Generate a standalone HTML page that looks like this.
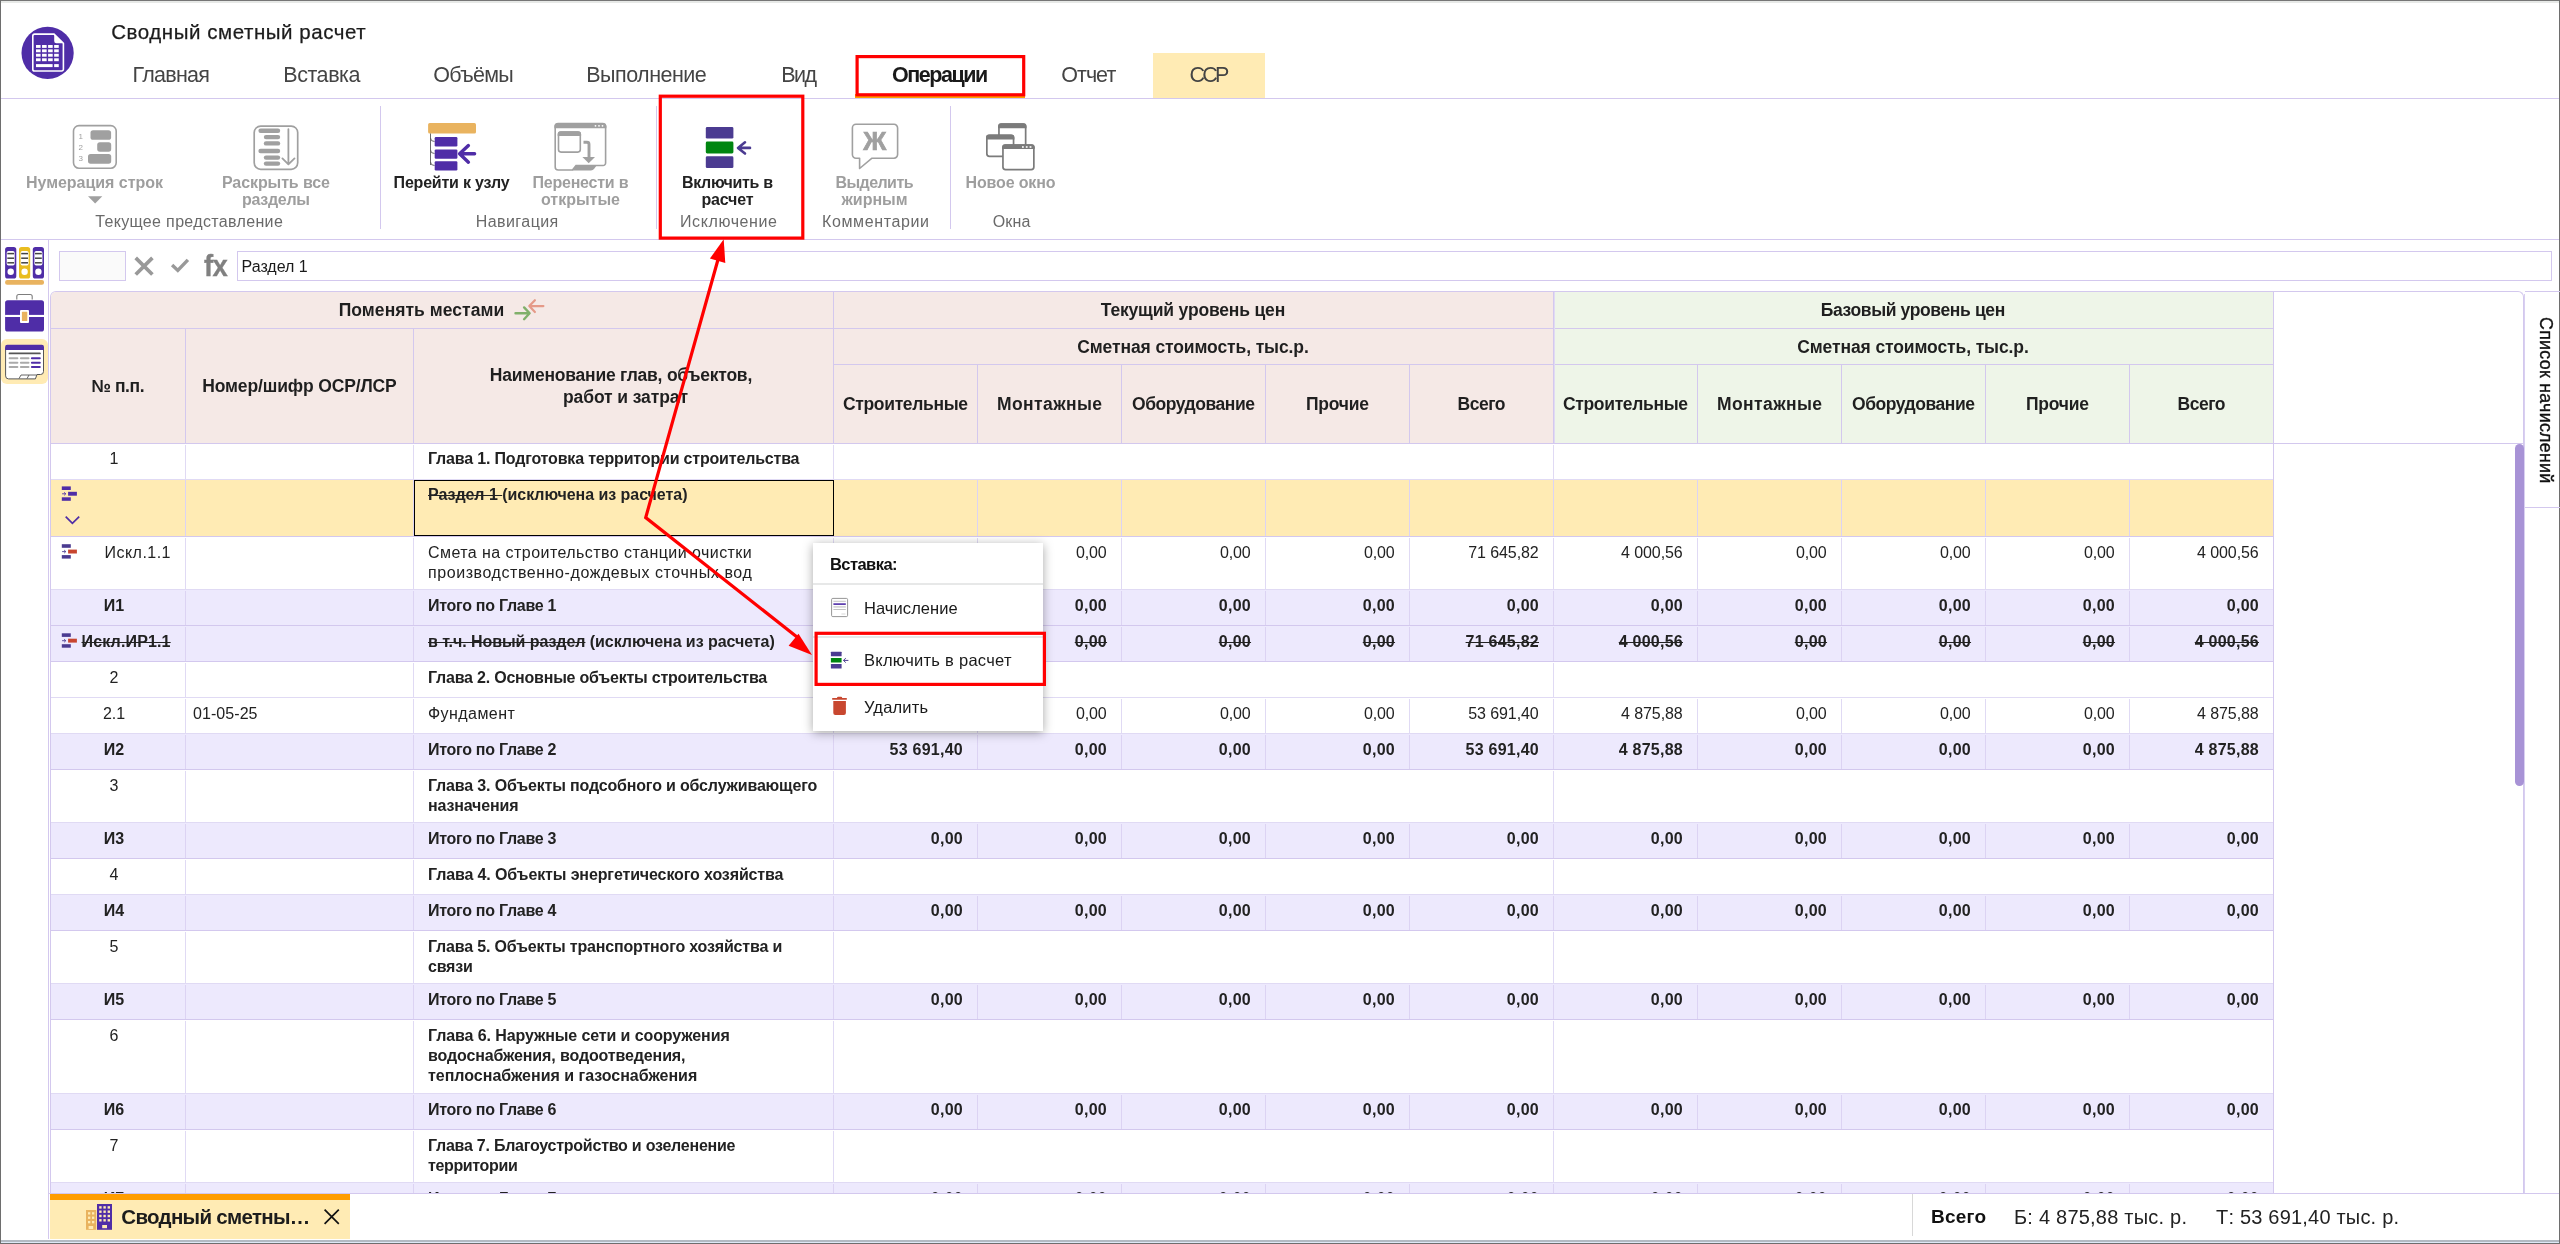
<!DOCTYPE html>
<html lang="ru"><head><meta charset="utf-8"><title>Сводный сметный расчет</title>
<style>
html,body{margin:0;padding:0}
body{width:2560px;height:1244px;overflow:hidden;background:#fff;font-family:"Liberation Sans", sans-serif;position:relative}
#app{position:absolute;left:0;top:0;width:2560px;height:1244px;overflow:hidden;will-change:transform}
</style></head><body><div id="app">
<div style="position:absolute;left:0px;top:0px;width:2560px;height:1px;background:#767676;"></div>
<div style="position:absolute;left:0px;top:1px;width:2560px;height:2px;background:#e7e9e7;"></div>
<div style="position:absolute;left:0px;top:1240px;width:2560px;height:2px;background:#b3bac3;"></div>
<div style="position:absolute;left:0px;top:1242px;width:2560px;height:1px;background:#dde9f7;"></div>
<div style="position:absolute;left:0px;top:1243px;width:2560px;height:1px;background:#6e6e6e;"></div>
<div style="position:absolute;left:0px;top:0px;width:1px;height:1244px;background:#6e6e6e;"></div>
<div style="position:absolute;left:2559px;top:0px;width:1px;height:1244px;background:#6e6e6e;"></div>
<div style="position:absolute;top:22.15px;font-size:20.5px;line-height:20.5px;white-space:nowrap;color:#1c1c1c;letter-spacing:0.555px;left:111.25px;-webkit-text-stroke:0.25px #1c1c1c;">Сводный сметный расчет</div>
<div style="position:absolute;left:1153px;top:53px;width:112px;height:45px;background:#ffebb4;"></div>
<div style="position:absolute;top:64.80px;font-size:21.5px;line-height:21.5px;white-space:nowrap;color:#444;letter-spacing:-0.722px;left:132.50px;">Главная</div>
<div style="position:absolute;top:64.80px;font-size:21.5px;line-height:21.5px;white-space:nowrap;color:#444;letter-spacing:-0.444px;left:283.25px;">Вставка</div>
<div style="position:absolute;top:64.80px;font-size:21.5px;line-height:21.5px;white-space:nowrap;color:#444;letter-spacing:-0.691px;left:433.25px;">Объёмы</div>
<div style="position:absolute;top:64.80px;font-size:21.5px;line-height:21.5px;white-space:nowrap;color:#444;letter-spacing:-0.515px;left:586.25px;">Выполнение</div>
<div style="position:absolute;top:64.80px;font-size:21.5px;line-height:21.5px;white-space:nowrap;color:#444;letter-spacing:-1.573px;left:781.25px;">Вид</div>
<div style="position:absolute;top:64.80px;font-size:21.5px;line-height:21.5px;white-space:nowrap;color:#444;letter-spacing:-0.966px;left:1061.25px;">Отчет</div>
<div style="position:absolute;top:64.80px;font-size:21.5px;line-height:21.5px;white-space:nowrap;color:#444;letter-spacing:-2.822px;left:1189.50px;">ССР</div>
<div style="position:absolute;top:64.80px;font-size:21.5px;line-height:21.5px;white-space:nowrap;color:#1a1a1a;font-weight:700;letter-spacing:-1.451px;left:892.00px;">Операции</div>
<div style="position:absolute;left:855px;top:94px;width:170px;height:4px;background:#ff9d00;"></div>
<div style="position:absolute;left:1px;top:98px;width:2558px;height:1px;background:#d3c8ee;"></div>
<div style="position:absolute;left:1px;top:239px;width:2558px;height:1px;background:#d3c8ee;"></div>
<div style="position:absolute;left:380px;top:106px;width:1px;height:123px;background:#d3c8ee;"></div>
<div style="position:absolute;left:656px;top:106px;width:1px;height:123px;background:#d3c8ee;"></div>
<div style="position:absolute;left:950px;top:106px;width:1px;height:123px;background:#d3c8ee;"></div>
<div style="position:absolute;top:175.46px;font-size:16px;line-height:16px;white-space:nowrap;color:#9e9e9e;font-weight:700;letter-spacing:-0.028px;left:26.00px;">Нумерация строк</div>
<div style="position:absolute;top:175.46px;font-size:16px;line-height:16px;white-space:nowrap;color:#9e9e9e;font-weight:700;letter-spacing:-0.096px;left:222.00px;">Раскрыть все</div>
<div style="position:absolute;top:192.46px;font-size:16px;line-height:16px;white-space:nowrap;color:#9e9e9e;font-weight:700;letter-spacing:-0.284px;left:242.00px;">разделы</div>
<div style="position:absolute;top:175.46px;font-size:16px;line-height:16px;white-space:nowrap;color:#222;font-weight:700;letter-spacing:-0.212px;left:393.60px;">Перейти к узлу</div>
<div style="position:absolute;top:175.46px;font-size:16px;line-height:16px;white-space:nowrap;color:#9e9e9e;font-weight:700;letter-spacing:-0.227px;left:532.50px;">Перенести в</div>
<div style="position:absolute;top:192.46px;font-size:16px;line-height:16px;white-space:nowrap;color:#9e9e9e;font-weight:700;letter-spacing:-0.008px;left:541.00px;">открытые</div>
<div style="position:absolute;top:175.46px;font-size:16px;line-height:16px;white-space:nowrap;color:#222;font-weight:700;letter-spacing:-0.339px;left:682.00px;">Включить в</div>
<div style="position:absolute;top:192.46px;font-size:16px;line-height:16px;white-space:nowrap;color:#222;font-weight:700;letter-spacing:-0.194px;left:701.50px;">расчет</div>
<div style="position:absolute;top:175.46px;font-size:16px;line-height:16px;white-space:nowrap;color:#9e9e9e;font-weight:700;letter-spacing:-0.564px;left:835.50px;">Выделить</div>
<div style="position:absolute;top:192.46px;font-size:16px;line-height:16px;white-space:nowrap;color:#9e9e9e;font-weight:700;letter-spacing:-0.023px;left:841.50px;">жирным</div>
<div style="position:absolute;top:175.46px;font-size:16px;line-height:16px;white-space:nowrap;color:#9e9e9e;font-weight:700;letter-spacing:-0.143px;left:965.50px;">Новое окно</div>
<div style="position:absolute;top:213.96px;font-size:16px;line-height:16px;white-space:nowrap;color:#6a6a6a;letter-spacing:0.344px;left:95.20px;">Текущее представление</div>
<div style="position:absolute;top:213.96px;font-size:16px;line-height:16px;white-space:nowrap;color:#6a6a6a;letter-spacing:0.445px;left:475.70px;">Навигация</div>
<div style="position:absolute;top:213.96px;font-size:16px;line-height:16px;white-space:nowrap;color:#6a6a6a;letter-spacing:0.603px;left:680.00px;">Исключение</div>
<div style="position:absolute;top:213.96px;font-size:16px;line-height:16px;white-space:nowrap;color:#6a6a6a;letter-spacing:0.623px;left:822.00px;">Комментарии</div>
<div style="position:absolute;top:213.96px;font-size:16px;line-height:16px;white-space:nowrap;color:#6a6a6a;letter-spacing:0.140px;left:992.70px;">Окна</div>
<div style="position:absolute;left:48px;top:240px;width:1px;height:999px;background:#d3c8ee;"></div>
<div style="position:absolute;left:1px;top:339px;width:47px;height:45px;background:#ffebb4;border-radius:6px;"></div>
<div style="position:absolute;left:59px;top:251px;width:65px;height:28px;border:1px solid #d3c8ee;background:#fafafa"></div>
<div style="position:absolute;left:237px;top:251px;width:2313px;height:28px;border:1px solid #d3c8ee;background:#fff"></div>
<div style="position:absolute;top:258.96px;font-size:16px;line-height:16px;white-space:nowrap;color:#1a1a1a;letter-spacing:-0.032px;left:241.60px;">Раздел 1</div>
<div style="position:absolute;top:250.64px;font-size:29.6px;line-height:29.6px;white-space:nowrap;color:#808080;font-weight:700;left:204.30px;-webkit-text-stroke:0.35px #808080;transform:scaleX(0.93);transform-origin:0 0;letter-spacing:-0.8px;">fx</div>
<div style="position:absolute;left:50px;top:291px;width:2474px;height:903px;border:1px solid #d3c8ee;border-radius:6px 6px 0 0;border-bottom:none;box-sizing:border-box"></div>
<div style="position:absolute;left:51px;top:292px;width:1502px;height:151px;background:#f5e9e6;border-radius:5px 0 0 0;"></div>
<div style="position:absolute;left:1553px;top:292px;width:720px;height:151px;background:#eef5e8;"></div>
<div style="position:absolute;left:51px;top:328px;width:2222px;height:1px;background:#d3c8ee;"></div>
<div style="position:absolute;left:833px;top:364px;width:1440px;height:1px;background:#d3c8ee;"></div>
<div style="position:absolute;left:185px;top:329px;width:1px;height:114px;background:#d3c8ee;"></div>
<div style="position:absolute;left:413px;top:329px;width:1px;height:114px;background:#d3c8ee;"></div>
<div style="position:absolute;left:833px;top:292px;width:1px;height:151px;background:#d3c8ee;"></div>
<div style="position:absolute;left:1553px;top:292px;width:1px;height:151px;background:#d3c8ee;"></div>
<div style="position:absolute;left:1554px;top:292px;width:1px;height:151px;background:#e0daf4;"></div>
<div style="position:absolute;left:2273px;top:292px;width:1px;height:151px;background:#d3c8ee;"></div>
<div style="position:absolute;left:977px;top:365px;width:1px;height:78px;background:#d3c8ee;"></div>
<div style="position:absolute;left:1121px;top:365px;width:1px;height:78px;background:#d3c8ee;"></div>
<div style="position:absolute;left:1265px;top:365px;width:1px;height:78px;background:#d3c8ee;"></div>
<div style="position:absolute;left:1409px;top:365px;width:1px;height:78px;background:#d3c8ee;"></div>
<div style="position:absolute;left:1697px;top:365px;width:1px;height:78px;background:#d3c8ee;"></div>
<div style="position:absolute;left:1841px;top:365px;width:1px;height:78px;background:#d3c8ee;"></div>
<div style="position:absolute;left:1985px;top:365px;width:1px;height:78px;background:#d3c8ee;"></div>
<div style="position:absolute;left:2129px;top:365px;width:1px;height:78px;background:#d3c8ee;"></div>
<div style="position:absolute;left:51px;top:443px;width:2473px;height:1px;background:#d3c8ee;"></div>
<div style="position:absolute;top:302.49px;font-size:17.5px;line-height:17.5px;white-space:nowrap;color:#1f1f1f;font-weight:700;letter-spacing:0.042px;left:338.75px;">Поменять местами</div>
<div style="position:absolute;top:302.49px;font-size:17.5px;line-height:17.5px;white-space:nowrap;color:#1f1f1f;font-weight:700;letter-spacing:-0.171px;left:1100.75px;">Текущий уровень цен</div>
<div style="position:absolute;top:302.49px;font-size:17.5px;line-height:17.5px;white-space:nowrap;color:#1f1f1f;font-weight:700;letter-spacing:-0.372px;left:1820.75px;">Базовый уровень цен</div>
<div style="position:absolute;top:339.39px;font-size:17.5px;line-height:17.5px;white-space:nowrap;color:#1f1f1f;font-weight:700;letter-spacing:-0.111px;left:1077.25px;">Сметная стоимость, тыс.р.</div>
<div style="position:absolute;top:339.39px;font-size:17.5px;line-height:17.5px;white-space:nowrap;color:#1f1f1f;font-weight:700;letter-spacing:-0.111px;left:1797.25px;">Сметная стоимость, тыс.р.</div>
<div style="position:absolute;top:377.69px;font-size:17.5px;line-height:17.5px;white-space:nowrap;color:#1f1f1f;font-weight:700;letter-spacing:-0.447px;left:91.50px;">№ п.п.</div>
<div style="position:absolute;top:377.69px;font-size:17.5px;line-height:17.5px;white-space:nowrap;color:#1f1f1f;font-weight:700;letter-spacing:-0.142px;left:202.25px;">Номер/шифр ОСР/ЛСР</div>
<div style="position:absolute;top:367.39px;font-size:17.5px;line-height:17.5px;white-space:nowrap;color:#1f1f1f;font-weight:700;letter-spacing:-0.226px;left:489.75px;">Наименование глав, объектов,</div>
<div style="position:absolute;top:388.89px;font-size:17.5px;line-height:17.5px;white-space:nowrap;color:#1f1f1f;font-weight:700;letter-spacing:-0.100px;left:563.00px;">работ и затрат</div>
<div style="position:absolute;top:396.39px;font-size:17.5px;line-height:17.5px;white-space:nowrap;color:#1f1f1f;font-weight:700;letter-spacing:-0.343px;left:843.00px;">Строительные</div>
<div style="position:absolute;top:396.39px;font-size:17.5px;line-height:17.5px;white-space:nowrap;color:#1f1f1f;font-weight:700;letter-spacing:0.401px;left:997.00px;">Монтажные</div>
<div style="position:absolute;top:396.39px;font-size:17.5px;line-height:17.5px;white-space:nowrap;color:#1f1f1f;font-weight:700;letter-spacing:-0.453px;left:1132.00px;">Оборудование</div>
<div style="position:absolute;top:396.39px;font-size:17.5px;line-height:17.5px;white-space:nowrap;color:#1f1f1f;font-weight:700;letter-spacing:-0.234px;left:1306.00px;">Прочие</div>
<div style="position:absolute;top:396.39px;font-size:17.5px;line-height:17.5px;white-space:nowrap;color:#1f1f1f;font-weight:700;letter-spacing:-0.463px;left:1457.50px;">Всего</div>
<div style="position:absolute;top:396.39px;font-size:17.5px;line-height:17.5px;white-space:nowrap;color:#1f1f1f;font-weight:700;letter-spacing:-0.343px;left:1563.00px;">Строительные</div>
<div style="position:absolute;top:396.39px;font-size:17.5px;line-height:17.5px;white-space:nowrap;color:#1f1f1f;font-weight:700;letter-spacing:0.401px;left:1717.00px;">Монтажные</div>
<div style="position:absolute;top:396.39px;font-size:17.5px;line-height:17.5px;white-space:nowrap;color:#1f1f1f;font-weight:700;letter-spacing:-0.453px;left:1852.00px;">Оборудование</div>
<div style="position:absolute;top:396.39px;font-size:17.5px;line-height:17.5px;white-space:nowrap;color:#1f1f1f;font-weight:700;letter-spacing:-0.234px;left:2026.00px;">Прочие</div>
<div style="position:absolute;top:396.39px;font-size:17.5px;line-height:17.5px;white-space:nowrap;color:#1f1f1f;font-weight:700;letter-spacing:-0.463px;left:2177.50px;">Всего</div>
<div style="position:absolute;left:0;top:0;width:2560px;height:1193px;overflow:hidden">
<div style="position:absolute;left:51px;top:479px;width:2222px;height:1px;background:#e0daf4;"></div>
<div style="position:absolute;left:185px;top:445px;width:1px;height:34px;background:#e0daf4;"></div>
<div style="position:absolute;left:413px;top:445px;width:1px;height:34px;background:#e0daf4;"></div>
<div style="position:absolute;left:833px;top:445px;width:1px;height:34px;background:#e0daf4;"></div>
<div style="position:absolute;left:1553px;top:445px;width:1px;height:34px;background:#e0daf4;"></div>
<div style="position:absolute;left:2273px;top:445px;width:1px;height:34px;background:#e0daf4;"></div>
<div style="position:absolute;top:451.46px;font-size:16px;line-height:16px;white-space:nowrap;color:#222;left:109.55px;">1</div>
<div style="position:absolute;top:451.46px;font-size:16px;line-height:16px;white-space:nowrap;color:#222;font-weight:700;letter-spacing:-0.180px;left:428.00px;">Глава 1. Подготовка территории строительства</div>
<div style="position:absolute;left:51px;top:480px;width:2222px;height:56px;background:#ffebb4;"></div>
<div style="position:absolute;left:51px;top:536px;width:2222px;height:1px;background:#d3c8ee;"></div>
<div style="position:absolute;left:185px;top:480px;width:1px;height:56px;background:#dcd3f3;"></div>
<div style="position:absolute;left:413px;top:480px;width:1px;height:56px;background:#dcd3f3;"></div>
<div style="position:absolute;left:833px;top:480px;width:1px;height:56px;background:#dcd3f3;"></div>
<div style="position:absolute;left:977px;top:480px;width:1px;height:56px;background:#dcd3f3;"></div>
<div style="position:absolute;left:1121px;top:480px;width:1px;height:56px;background:#dcd3f3;"></div>
<div style="position:absolute;left:1265px;top:480px;width:1px;height:56px;background:#dcd3f3;"></div>
<div style="position:absolute;left:1409px;top:480px;width:1px;height:56px;background:#dcd3f3;"></div>
<div style="position:absolute;left:1553px;top:480px;width:1px;height:56px;background:#dcd3f3;"></div>
<div style="position:absolute;left:1697px;top:480px;width:1px;height:56px;background:#dcd3f3;"></div>
<div style="position:absolute;left:1841px;top:480px;width:1px;height:56px;background:#dcd3f3;"></div>
<div style="position:absolute;left:1985px;top:480px;width:1px;height:56px;background:#dcd3f3;"></div>
<div style="position:absolute;left:2129px;top:480px;width:1px;height:56px;background:#dcd3f3;"></div>
<div style="position:absolute;left:2273px;top:480px;width:1px;height:56px;background:#dcd3f3;"></div>
<div style="position:absolute;top:487.46px;font-size:16px;line-height:16px;white-space:nowrap;color:#222;font-weight:700;letter-spacing:-0.038px;left:428.00px;"><span style="text-decoration:line-through">Раздел 1 </span>(исключена из расчета)</div>
<div style="position:absolute;left:51px;top:589px;width:2222px;height:1px;background:#e0daf4;"></div>
<div style="position:absolute;left:185px;top:538px;width:1px;height:51px;background:#e0daf4;"></div>
<div style="position:absolute;left:413px;top:538px;width:1px;height:51px;background:#e0daf4;"></div>
<div style="position:absolute;left:833px;top:538px;width:1px;height:51px;background:#e0daf4;"></div>
<div style="position:absolute;left:977px;top:538px;width:1px;height:51px;background:#e0daf4;"></div>
<div style="position:absolute;left:1121px;top:538px;width:1px;height:51px;background:#e0daf4;"></div>
<div style="position:absolute;left:1265px;top:538px;width:1px;height:51px;background:#e0daf4;"></div>
<div style="position:absolute;left:1409px;top:538px;width:1px;height:51px;background:#e0daf4;"></div>
<div style="position:absolute;left:1553px;top:538px;width:1px;height:51px;background:#e0daf4;"></div>
<div style="position:absolute;left:1697px;top:538px;width:1px;height:51px;background:#e0daf4;"></div>
<div style="position:absolute;left:1841px;top:538px;width:1px;height:51px;background:#e0daf4;"></div>
<div style="position:absolute;left:1985px;top:538px;width:1px;height:51px;background:#e0daf4;"></div>
<div style="position:absolute;left:2129px;top:538px;width:1px;height:51px;background:#e0daf4;"></div>
<div style="position:absolute;left:2273px;top:538px;width:1px;height:51px;background:#e0daf4;"></div>
<div style="position:absolute;top:545.46px;font-size:16px;line-height:16px;white-space:nowrap;color:#222;letter-spacing:0.448px;left:104.58px;">Искл.1.1</div>
<div style="position:absolute;top:545.46px;font-size:16px;line-height:16px;white-space:nowrap;color:#222;letter-spacing:0.445px;left:428.00px;">Смета на строительство станции очистки</div>
<div style="position:absolute;top:565.46px;font-size:16px;line-height:16px;white-space:nowrap;color:#222;letter-spacing:0.569px;left:428.00px;">производственно-дождевых сточных вод</div>
<div style="position:absolute;top:545.46px;font-size:16px;line-height:16px;white-space:nowrap;color:#222;letter-spacing:-0.089px;left:892.28px;">71 645,82</div>
<div style="position:absolute;top:545.46px;font-size:16px;line-height:16px;white-space:nowrap;color:#222;letter-spacing:-0.104px;left:1075.92px;">0,00</div>
<div style="position:absolute;top:545.46px;font-size:16px;line-height:16px;white-space:nowrap;color:#222;letter-spacing:-0.104px;left:1219.92px;">0,00</div>
<div style="position:absolute;top:545.46px;font-size:16px;line-height:16px;white-space:nowrap;color:#222;letter-spacing:-0.104px;left:1363.92px;">0,00</div>
<div style="position:absolute;top:545.46px;font-size:16px;line-height:16px;white-space:nowrap;color:#222;letter-spacing:-0.089px;left:1468.28px;">71 645,82</div>
<div style="position:absolute;top:545.46px;font-size:16px;line-height:16px;white-space:nowrap;color:#222;letter-spacing:-0.089px;left:1621.09px;">4 000,56</div>
<div style="position:absolute;top:545.46px;font-size:16px;line-height:16px;white-space:nowrap;color:#222;letter-spacing:-0.104px;left:1795.92px;">0,00</div>
<div style="position:absolute;top:545.46px;font-size:16px;line-height:16px;white-space:nowrap;color:#222;letter-spacing:-0.104px;left:1939.92px;">0,00</div>
<div style="position:absolute;top:545.46px;font-size:16px;line-height:16px;white-space:nowrap;color:#222;letter-spacing:-0.104px;left:2083.92px;">0,00</div>
<div style="position:absolute;top:545.46px;font-size:16px;line-height:16px;white-space:nowrap;color:#222;letter-spacing:-0.089px;left:2197.09px;">4 000,56</div>
<div style="position:absolute;left:51px;top:590px;width:2222px;height:35px;background:#ede9fd;"></div>
<div style="position:absolute;left:51px;top:625px;width:2222px;height:1px;background:#d3c8ee;"></div>
<div style="position:absolute;left:185px;top:591px;width:1px;height:34px;background:#dcd3f3;"></div>
<div style="position:absolute;left:413px;top:591px;width:1px;height:34px;background:#dcd3f3;"></div>
<div style="position:absolute;left:833px;top:591px;width:1px;height:34px;background:#dcd3f3;"></div>
<div style="position:absolute;left:977px;top:591px;width:1px;height:34px;background:#dcd3f3;"></div>
<div style="position:absolute;left:1121px;top:591px;width:1px;height:34px;background:#dcd3f3;"></div>
<div style="position:absolute;left:1265px;top:591px;width:1px;height:34px;background:#dcd3f3;"></div>
<div style="position:absolute;left:1409px;top:591px;width:1px;height:34px;background:#dcd3f3;"></div>
<div style="position:absolute;left:1553px;top:591px;width:1px;height:34px;background:#dcd3f3;"></div>
<div style="position:absolute;left:1697px;top:591px;width:1px;height:34px;background:#dcd3f3;"></div>
<div style="position:absolute;left:1841px;top:591px;width:1px;height:34px;background:#dcd3f3;"></div>
<div style="position:absolute;left:1985px;top:591px;width:1px;height:34px;background:#dcd3f3;"></div>
<div style="position:absolute;left:2129px;top:591px;width:1px;height:34px;background:#dcd3f3;"></div>
<div style="position:absolute;left:2273px;top:591px;width:1px;height:34px;background:#dcd3f3;"></div>
<div style="position:absolute;top:598.46px;font-size:16px;line-height:16px;white-space:nowrap;color:#222;font-weight:700;left:103.80px;">И1</div>
<div style="position:absolute;top:598.46px;font-size:16px;line-height:16px;white-space:nowrap;color:#222;font-weight:700;letter-spacing:-0.284px;left:428.00px;">Итого по Главе 1</div>
<div style="position:absolute;top:598.46px;font-size:16px;line-height:16px;white-space:nowrap;color:#222;font-weight:700;letter-spacing:0.291px;left:930.74px;">0,00</div>
<div style="position:absolute;top:598.46px;font-size:16px;line-height:16px;white-space:nowrap;color:#222;font-weight:700;letter-spacing:0.291px;left:1074.74px;">0,00</div>
<div style="position:absolute;top:598.46px;font-size:16px;line-height:16px;white-space:nowrap;color:#222;font-weight:700;letter-spacing:0.291px;left:1218.74px;">0,00</div>
<div style="position:absolute;top:598.46px;font-size:16px;line-height:16px;white-space:nowrap;color:#222;font-weight:700;letter-spacing:0.291px;left:1362.74px;">0,00</div>
<div style="position:absolute;top:598.46px;font-size:16px;line-height:16px;white-space:nowrap;color:#222;font-weight:700;letter-spacing:0.291px;left:1506.74px;">0,00</div>
<div style="position:absolute;top:598.46px;font-size:16px;line-height:16px;white-space:nowrap;color:#222;font-weight:700;letter-spacing:0.291px;left:1650.74px;">0,00</div>
<div style="position:absolute;top:598.46px;font-size:16px;line-height:16px;white-space:nowrap;color:#222;font-weight:700;letter-spacing:0.291px;left:1794.74px;">0,00</div>
<div style="position:absolute;top:598.46px;font-size:16px;line-height:16px;white-space:nowrap;color:#222;font-weight:700;letter-spacing:0.291px;left:1938.74px;">0,00</div>
<div style="position:absolute;top:598.46px;font-size:16px;line-height:16px;white-space:nowrap;color:#222;font-weight:700;letter-spacing:0.291px;left:2082.74px;">0,00</div>
<div style="position:absolute;top:598.46px;font-size:16px;line-height:16px;white-space:nowrap;color:#222;font-weight:700;letter-spacing:0.291px;left:2226.74px;">0,00</div>
<div style="position:absolute;left:51px;top:626px;width:2222px;height:35px;background:#ede9fd;"></div>
<div style="position:absolute;left:51px;top:661px;width:2222px;height:1px;background:#d3c8ee;"></div>
<div style="position:absolute;left:185px;top:627px;width:1px;height:34px;background:#dcd3f3;"></div>
<div style="position:absolute;left:413px;top:627px;width:1px;height:34px;background:#dcd3f3;"></div>
<div style="position:absolute;left:833px;top:627px;width:1px;height:34px;background:#dcd3f3;"></div>
<div style="position:absolute;left:977px;top:627px;width:1px;height:34px;background:#dcd3f3;"></div>
<div style="position:absolute;left:1121px;top:627px;width:1px;height:34px;background:#dcd3f3;"></div>
<div style="position:absolute;left:1265px;top:627px;width:1px;height:34px;background:#dcd3f3;"></div>
<div style="position:absolute;left:1409px;top:627px;width:1px;height:34px;background:#dcd3f3;"></div>
<div style="position:absolute;left:1553px;top:627px;width:1px;height:34px;background:#dcd3f3;"></div>
<div style="position:absolute;left:1697px;top:627px;width:1px;height:34px;background:#dcd3f3;"></div>
<div style="position:absolute;left:1841px;top:627px;width:1px;height:34px;background:#dcd3f3;"></div>
<div style="position:absolute;left:1985px;top:627px;width:1px;height:34px;background:#dcd3f3;"></div>
<div style="position:absolute;left:2129px;top:627px;width:1px;height:34px;background:#dcd3f3;"></div>
<div style="position:absolute;left:2273px;top:627px;width:1px;height:34px;background:#dcd3f3;"></div>
<div style="position:absolute;top:634.46px;font-size:16px;line-height:16px;white-space:nowrap;color:#222;font-weight:700;letter-spacing:0.153px;left:81.50px;text-decoration:line-through;">Искл.ИР1.1</div>
<div style="position:absolute;top:634.46px;font-size:16px;line-height:16px;white-space:nowrap;color:#222;font-weight:700;letter-spacing:-0.056px;left:428.00px;"><span style="text-decoration:line-through">в т.ч. Новый раздел</span> (исключена из расчета)</div>
<div style="position:absolute;top:634.46px;font-size:16px;line-height:16px;white-space:nowrap;color:#222;font-weight:700;letter-spacing:0.249px;left:889.58px;text-decoration:line-through;">71 645,82</div>
<div style="position:absolute;top:634.46px;font-size:16px;line-height:16px;white-space:nowrap;color:#222;font-weight:700;letter-spacing:0.291px;left:1074.74px;text-decoration:line-through;">0,00</div>
<div style="position:absolute;top:634.46px;font-size:16px;line-height:16px;white-space:nowrap;color:#222;font-weight:700;letter-spacing:0.291px;left:1218.74px;text-decoration:line-through;">0,00</div>
<div style="position:absolute;top:634.46px;font-size:16px;line-height:16px;white-space:nowrap;color:#222;font-weight:700;letter-spacing:0.291px;left:1362.74px;text-decoration:line-through;">0,00</div>
<div style="position:absolute;top:634.46px;font-size:16px;line-height:16px;white-space:nowrap;color:#222;font-weight:700;letter-spacing:0.249px;left:1465.58px;text-decoration:line-through;">71 645,82</div>
<div style="position:absolute;top:634.46px;font-size:16px;line-height:16px;white-space:nowrap;color:#222;font-weight:700;letter-spacing:0.249px;left:1618.72px;text-decoration:line-through;">4 000,56</div>
<div style="position:absolute;top:634.46px;font-size:16px;line-height:16px;white-space:nowrap;color:#222;font-weight:700;letter-spacing:0.291px;left:1794.74px;text-decoration:line-through;">0,00</div>
<div style="position:absolute;top:634.46px;font-size:16px;line-height:16px;white-space:nowrap;color:#222;font-weight:700;letter-spacing:0.291px;left:1938.74px;text-decoration:line-through;">0,00</div>
<div style="position:absolute;top:634.46px;font-size:16px;line-height:16px;white-space:nowrap;color:#222;font-weight:700;letter-spacing:0.291px;left:2082.74px;text-decoration:line-through;">0,00</div>
<div style="position:absolute;top:634.46px;font-size:16px;line-height:16px;white-space:nowrap;color:#222;font-weight:700;letter-spacing:0.249px;left:2194.72px;text-decoration:line-through;">4 000,56</div>
<div style="position:absolute;left:51px;top:697px;width:2222px;height:1px;background:#e0daf4;"></div>
<div style="position:absolute;left:185px;top:663px;width:1px;height:34px;background:#e0daf4;"></div>
<div style="position:absolute;left:413px;top:663px;width:1px;height:34px;background:#e0daf4;"></div>
<div style="position:absolute;left:833px;top:663px;width:1px;height:34px;background:#e0daf4;"></div>
<div style="position:absolute;left:1553px;top:663px;width:1px;height:34px;background:#e0daf4;"></div>
<div style="position:absolute;left:2273px;top:663px;width:1px;height:34px;background:#e0daf4;"></div>
<div style="position:absolute;top:670.46px;font-size:16px;line-height:16px;white-space:nowrap;color:#222;left:109.55px;">2</div>
<div style="position:absolute;top:670.46px;font-size:16px;line-height:16px;white-space:nowrap;color:#222;font-weight:700;letter-spacing:-0.216px;left:428.00px;">Глава 2. Основные объекты строительства</div>
<div style="position:absolute;left:51px;top:733px;width:2222px;height:1px;background:#e0daf4;"></div>
<div style="position:absolute;left:185px;top:699px;width:1px;height:34px;background:#e0daf4;"></div>
<div style="position:absolute;left:413px;top:699px;width:1px;height:34px;background:#e0daf4;"></div>
<div style="position:absolute;left:833px;top:699px;width:1px;height:34px;background:#e0daf4;"></div>
<div style="position:absolute;left:977px;top:699px;width:1px;height:34px;background:#e0daf4;"></div>
<div style="position:absolute;left:1121px;top:699px;width:1px;height:34px;background:#e0daf4;"></div>
<div style="position:absolute;left:1265px;top:699px;width:1px;height:34px;background:#e0daf4;"></div>
<div style="position:absolute;left:1409px;top:699px;width:1px;height:34px;background:#e0daf4;"></div>
<div style="position:absolute;left:1553px;top:699px;width:1px;height:34px;background:#e0daf4;"></div>
<div style="position:absolute;left:1697px;top:699px;width:1px;height:34px;background:#e0daf4;"></div>
<div style="position:absolute;left:1841px;top:699px;width:1px;height:34px;background:#e0daf4;"></div>
<div style="position:absolute;left:1985px;top:699px;width:1px;height:34px;background:#e0daf4;"></div>
<div style="position:absolute;left:2129px;top:699px;width:1px;height:34px;background:#e0daf4;"></div>
<div style="position:absolute;left:2273px;top:699px;width:1px;height:34px;background:#e0daf4;"></div>
<div style="position:absolute;top:706.46px;font-size:16px;line-height:16px;white-space:nowrap;color:#222;left:102.88px;">2.1</div>
<div style="position:absolute;top:706.46px;font-size:16px;line-height:16px;white-space:nowrap;color:#222;letter-spacing:0.065px;left:193.00px;">01-05-25</div>
<div style="position:absolute;top:706.46px;font-size:16px;line-height:16px;white-space:nowrap;color:#222;letter-spacing:0.432px;left:428.00px;">Фундамент</div>
<div style="position:absolute;top:706.46px;font-size:16px;line-height:16px;white-space:nowrap;color:#222;letter-spacing:-0.089px;left:892.28px;">53 691,40</div>
<div style="position:absolute;top:706.46px;font-size:16px;line-height:16px;white-space:nowrap;color:#222;letter-spacing:-0.104px;left:1075.92px;">0,00</div>
<div style="position:absolute;top:706.46px;font-size:16px;line-height:16px;white-space:nowrap;color:#222;letter-spacing:-0.104px;left:1219.92px;">0,00</div>
<div style="position:absolute;top:706.46px;font-size:16px;line-height:16px;white-space:nowrap;color:#222;letter-spacing:-0.104px;left:1363.92px;">0,00</div>
<div style="position:absolute;top:706.46px;font-size:16px;line-height:16px;white-space:nowrap;color:#222;letter-spacing:-0.089px;left:1468.28px;">53 691,40</div>
<div style="position:absolute;top:706.46px;font-size:16px;line-height:16px;white-space:nowrap;color:#222;letter-spacing:-0.089px;left:1621.09px;">4 875,88</div>
<div style="position:absolute;top:706.46px;font-size:16px;line-height:16px;white-space:nowrap;color:#222;letter-spacing:-0.104px;left:1795.92px;">0,00</div>
<div style="position:absolute;top:706.46px;font-size:16px;line-height:16px;white-space:nowrap;color:#222;letter-spacing:-0.104px;left:1939.92px;">0,00</div>
<div style="position:absolute;top:706.46px;font-size:16px;line-height:16px;white-space:nowrap;color:#222;letter-spacing:-0.104px;left:2083.92px;">0,00</div>
<div style="position:absolute;top:706.46px;font-size:16px;line-height:16px;white-space:nowrap;color:#222;letter-spacing:-0.089px;left:2197.09px;">4 875,88</div>
<div style="position:absolute;left:51px;top:734px;width:2222px;height:35px;background:#ede9fd;"></div>
<div style="position:absolute;left:51px;top:769px;width:2222px;height:1px;background:#d3c8ee;"></div>
<div style="position:absolute;left:185px;top:735px;width:1px;height:34px;background:#dcd3f3;"></div>
<div style="position:absolute;left:413px;top:735px;width:1px;height:34px;background:#dcd3f3;"></div>
<div style="position:absolute;left:833px;top:735px;width:1px;height:34px;background:#dcd3f3;"></div>
<div style="position:absolute;left:977px;top:735px;width:1px;height:34px;background:#dcd3f3;"></div>
<div style="position:absolute;left:1121px;top:735px;width:1px;height:34px;background:#dcd3f3;"></div>
<div style="position:absolute;left:1265px;top:735px;width:1px;height:34px;background:#dcd3f3;"></div>
<div style="position:absolute;left:1409px;top:735px;width:1px;height:34px;background:#dcd3f3;"></div>
<div style="position:absolute;left:1553px;top:735px;width:1px;height:34px;background:#dcd3f3;"></div>
<div style="position:absolute;left:1697px;top:735px;width:1px;height:34px;background:#dcd3f3;"></div>
<div style="position:absolute;left:1841px;top:735px;width:1px;height:34px;background:#dcd3f3;"></div>
<div style="position:absolute;left:1985px;top:735px;width:1px;height:34px;background:#dcd3f3;"></div>
<div style="position:absolute;left:2129px;top:735px;width:1px;height:34px;background:#dcd3f3;"></div>
<div style="position:absolute;left:2273px;top:735px;width:1px;height:34px;background:#dcd3f3;"></div>
<div style="position:absolute;top:742.46px;font-size:16px;line-height:16px;white-space:nowrap;color:#222;font-weight:700;left:103.80px;">И2</div>
<div style="position:absolute;top:742.46px;font-size:16px;line-height:16px;white-space:nowrap;color:#222;font-weight:700;letter-spacing:-0.284px;left:428.00px;">Итого по Главе 2</div>
<div style="position:absolute;top:742.46px;font-size:16px;line-height:16px;white-space:nowrap;color:#222;font-weight:700;letter-spacing:0.249px;left:889.58px;">53 691,40</div>
<div style="position:absolute;top:742.46px;font-size:16px;line-height:16px;white-space:nowrap;color:#222;font-weight:700;letter-spacing:0.291px;left:1074.74px;">0,00</div>
<div style="position:absolute;top:742.46px;font-size:16px;line-height:16px;white-space:nowrap;color:#222;font-weight:700;letter-spacing:0.291px;left:1218.74px;">0,00</div>
<div style="position:absolute;top:742.46px;font-size:16px;line-height:16px;white-space:nowrap;color:#222;font-weight:700;letter-spacing:0.291px;left:1362.74px;">0,00</div>
<div style="position:absolute;top:742.46px;font-size:16px;line-height:16px;white-space:nowrap;color:#222;font-weight:700;letter-spacing:0.249px;left:1465.58px;">53 691,40</div>
<div style="position:absolute;top:742.46px;font-size:16px;line-height:16px;white-space:nowrap;color:#222;font-weight:700;letter-spacing:0.249px;left:1618.72px;">4 875,88</div>
<div style="position:absolute;top:742.46px;font-size:16px;line-height:16px;white-space:nowrap;color:#222;font-weight:700;letter-spacing:0.291px;left:1794.74px;">0,00</div>
<div style="position:absolute;top:742.46px;font-size:16px;line-height:16px;white-space:nowrap;color:#222;font-weight:700;letter-spacing:0.291px;left:1938.74px;">0,00</div>
<div style="position:absolute;top:742.46px;font-size:16px;line-height:16px;white-space:nowrap;color:#222;font-weight:700;letter-spacing:0.291px;left:2082.74px;">0,00</div>
<div style="position:absolute;top:742.46px;font-size:16px;line-height:16px;white-space:nowrap;color:#222;font-weight:700;letter-spacing:0.249px;left:2194.72px;">4 875,88</div>
<div style="position:absolute;left:51px;top:822px;width:2222px;height:1px;background:#e0daf4;"></div>
<div style="position:absolute;left:185px;top:771px;width:1px;height:51px;background:#e0daf4;"></div>
<div style="position:absolute;left:413px;top:771px;width:1px;height:51px;background:#e0daf4;"></div>
<div style="position:absolute;left:833px;top:771px;width:1px;height:51px;background:#e0daf4;"></div>
<div style="position:absolute;left:1553px;top:771px;width:1px;height:51px;background:#e0daf4;"></div>
<div style="position:absolute;left:2273px;top:771px;width:1px;height:51px;background:#e0daf4;"></div>
<div style="position:absolute;top:778.46px;font-size:16px;line-height:16px;white-space:nowrap;color:#222;left:109.55px;">3</div>
<div style="position:absolute;top:778.46px;font-size:16px;line-height:16px;white-space:nowrap;color:#222;font-weight:700;letter-spacing:-0.162px;left:428.00px;">Глава 3. Объекты подсобного и обслуживающего</div>
<div style="position:absolute;top:798.46px;font-size:16px;line-height:16px;white-space:nowrap;color:#222;font-weight:700;letter-spacing:-0.155px;left:428.00px;">назначения</div>
<div style="position:absolute;left:51px;top:823px;width:2222px;height:35px;background:#ede9fd;"></div>
<div style="position:absolute;left:51px;top:858px;width:2222px;height:1px;background:#d3c8ee;"></div>
<div style="position:absolute;left:185px;top:824px;width:1px;height:34px;background:#dcd3f3;"></div>
<div style="position:absolute;left:413px;top:824px;width:1px;height:34px;background:#dcd3f3;"></div>
<div style="position:absolute;left:833px;top:824px;width:1px;height:34px;background:#dcd3f3;"></div>
<div style="position:absolute;left:977px;top:824px;width:1px;height:34px;background:#dcd3f3;"></div>
<div style="position:absolute;left:1121px;top:824px;width:1px;height:34px;background:#dcd3f3;"></div>
<div style="position:absolute;left:1265px;top:824px;width:1px;height:34px;background:#dcd3f3;"></div>
<div style="position:absolute;left:1409px;top:824px;width:1px;height:34px;background:#dcd3f3;"></div>
<div style="position:absolute;left:1553px;top:824px;width:1px;height:34px;background:#dcd3f3;"></div>
<div style="position:absolute;left:1697px;top:824px;width:1px;height:34px;background:#dcd3f3;"></div>
<div style="position:absolute;left:1841px;top:824px;width:1px;height:34px;background:#dcd3f3;"></div>
<div style="position:absolute;left:1985px;top:824px;width:1px;height:34px;background:#dcd3f3;"></div>
<div style="position:absolute;left:2129px;top:824px;width:1px;height:34px;background:#dcd3f3;"></div>
<div style="position:absolute;left:2273px;top:824px;width:1px;height:34px;background:#dcd3f3;"></div>
<div style="position:absolute;top:831.46px;font-size:16px;line-height:16px;white-space:nowrap;color:#222;font-weight:700;left:103.80px;">И3</div>
<div style="position:absolute;top:831.46px;font-size:16px;line-height:16px;white-space:nowrap;color:#222;font-weight:700;letter-spacing:-0.284px;left:428.00px;">Итого по Главе 3</div>
<div style="position:absolute;top:831.46px;font-size:16px;line-height:16px;white-space:nowrap;color:#222;font-weight:700;letter-spacing:0.291px;left:930.74px;">0,00</div>
<div style="position:absolute;top:831.46px;font-size:16px;line-height:16px;white-space:nowrap;color:#222;font-weight:700;letter-spacing:0.291px;left:1074.74px;">0,00</div>
<div style="position:absolute;top:831.46px;font-size:16px;line-height:16px;white-space:nowrap;color:#222;font-weight:700;letter-spacing:0.291px;left:1218.74px;">0,00</div>
<div style="position:absolute;top:831.46px;font-size:16px;line-height:16px;white-space:nowrap;color:#222;font-weight:700;letter-spacing:0.291px;left:1362.74px;">0,00</div>
<div style="position:absolute;top:831.46px;font-size:16px;line-height:16px;white-space:nowrap;color:#222;font-weight:700;letter-spacing:0.291px;left:1506.74px;">0,00</div>
<div style="position:absolute;top:831.46px;font-size:16px;line-height:16px;white-space:nowrap;color:#222;font-weight:700;letter-spacing:0.291px;left:1650.74px;">0,00</div>
<div style="position:absolute;top:831.46px;font-size:16px;line-height:16px;white-space:nowrap;color:#222;font-weight:700;letter-spacing:0.291px;left:1794.74px;">0,00</div>
<div style="position:absolute;top:831.46px;font-size:16px;line-height:16px;white-space:nowrap;color:#222;font-weight:700;letter-spacing:0.291px;left:1938.74px;">0,00</div>
<div style="position:absolute;top:831.46px;font-size:16px;line-height:16px;white-space:nowrap;color:#222;font-weight:700;letter-spacing:0.291px;left:2082.74px;">0,00</div>
<div style="position:absolute;top:831.46px;font-size:16px;line-height:16px;white-space:nowrap;color:#222;font-weight:700;letter-spacing:0.291px;left:2226.74px;">0,00</div>
<div style="position:absolute;left:51px;top:894px;width:2222px;height:1px;background:#e0daf4;"></div>
<div style="position:absolute;left:185px;top:860px;width:1px;height:34px;background:#e0daf4;"></div>
<div style="position:absolute;left:413px;top:860px;width:1px;height:34px;background:#e0daf4;"></div>
<div style="position:absolute;left:833px;top:860px;width:1px;height:34px;background:#e0daf4;"></div>
<div style="position:absolute;left:1553px;top:860px;width:1px;height:34px;background:#e0daf4;"></div>
<div style="position:absolute;left:2273px;top:860px;width:1px;height:34px;background:#e0daf4;"></div>
<div style="position:absolute;top:867.46px;font-size:16px;line-height:16px;white-space:nowrap;color:#222;left:109.55px;">4</div>
<div style="position:absolute;top:867.46px;font-size:16px;line-height:16px;white-space:nowrap;color:#222;font-weight:700;letter-spacing:-0.122px;left:428.00px;">Глава 4. Объекты энергетического хозяйства</div>
<div style="position:absolute;left:51px;top:895px;width:2222px;height:35px;background:#ede9fd;"></div>
<div style="position:absolute;left:51px;top:930px;width:2222px;height:1px;background:#d3c8ee;"></div>
<div style="position:absolute;left:185px;top:896px;width:1px;height:34px;background:#dcd3f3;"></div>
<div style="position:absolute;left:413px;top:896px;width:1px;height:34px;background:#dcd3f3;"></div>
<div style="position:absolute;left:833px;top:896px;width:1px;height:34px;background:#dcd3f3;"></div>
<div style="position:absolute;left:977px;top:896px;width:1px;height:34px;background:#dcd3f3;"></div>
<div style="position:absolute;left:1121px;top:896px;width:1px;height:34px;background:#dcd3f3;"></div>
<div style="position:absolute;left:1265px;top:896px;width:1px;height:34px;background:#dcd3f3;"></div>
<div style="position:absolute;left:1409px;top:896px;width:1px;height:34px;background:#dcd3f3;"></div>
<div style="position:absolute;left:1553px;top:896px;width:1px;height:34px;background:#dcd3f3;"></div>
<div style="position:absolute;left:1697px;top:896px;width:1px;height:34px;background:#dcd3f3;"></div>
<div style="position:absolute;left:1841px;top:896px;width:1px;height:34px;background:#dcd3f3;"></div>
<div style="position:absolute;left:1985px;top:896px;width:1px;height:34px;background:#dcd3f3;"></div>
<div style="position:absolute;left:2129px;top:896px;width:1px;height:34px;background:#dcd3f3;"></div>
<div style="position:absolute;left:2273px;top:896px;width:1px;height:34px;background:#dcd3f3;"></div>
<div style="position:absolute;top:903.46px;font-size:16px;line-height:16px;white-space:nowrap;color:#222;font-weight:700;left:103.80px;">И4</div>
<div style="position:absolute;top:903.46px;font-size:16px;line-height:16px;white-space:nowrap;color:#222;font-weight:700;letter-spacing:-0.284px;left:428.00px;">Итого по Главе 4</div>
<div style="position:absolute;top:903.46px;font-size:16px;line-height:16px;white-space:nowrap;color:#222;font-weight:700;letter-spacing:0.291px;left:930.74px;">0,00</div>
<div style="position:absolute;top:903.46px;font-size:16px;line-height:16px;white-space:nowrap;color:#222;font-weight:700;letter-spacing:0.291px;left:1074.74px;">0,00</div>
<div style="position:absolute;top:903.46px;font-size:16px;line-height:16px;white-space:nowrap;color:#222;font-weight:700;letter-spacing:0.291px;left:1218.74px;">0,00</div>
<div style="position:absolute;top:903.46px;font-size:16px;line-height:16px;white-space:nowrap;color:#222;font-weight:700;letter-spacing:0.291px;left:1362.74px;">0,00</div>
<div style="position:absolute;top:903.46px;font-size:16px;line-height:16px;white-space:nowrap;color:#222;font-weight:700;letter-spacing:0.291px;left:1506.74px;">0,00</div>
<div style="position:absolute;top:903.46px;font-size:16px;line-height:16px;white-space:nowrap;color:#222;font-weight:700;letter-spacing:0.291px;left:1650.74px;">0,00</div>
<div style="position:absolute;top:903.46px;font-size:16px;line-height:16px;white-space:nowrap;color:#222;font-weight:700;letter-spacing:0.291px;left:1794.74px;">0,00</div>
<div style="position:absolute;top:903.46px;font-size:16px;line-height:16px;white-space:nowrap;color:#222;font-weight:700;letter-spacing:0.291px;left:1938.74px;">0,00</div>
<div style="position:absolute;top:903.46px;font-size:16px;line-height:16px;white-space:nowrap;color:#222;font-weight:700;letter-spacing:0.291px;left:2082.74px;">0,00</div>
<div style="position:absolute;top:903.46px;font-size:16px;line-height:16px;white-space:nowrap;color:#222;font-weight:700;letter-spacing:0.291px;left:2226.74px;">0,00</div>
<div style="position:absolute;left:51px;top:983px;width:2222px;height:1px;background:#e0daf4;"></div>
<div style="position:absolute;left:185px;top:932px;width:1px;height:51px;background:#e0daf4;"></div>
<div style="position:absolute;left:413px;top:932px;width:1px;height:51px;background:#e0daf4;"></div>
<div style="position:absolute;left:833px;top:932px;width:1px;height:51px;background:#e0daf4;"></div>
<div style="position:absolute;left:1553px;top:932px;width:1px;height:51px;background:#e0daf4;"></div>
<div style="position:absolute;left:2273px;top:932px;width:1px;height:51px;background:#e0daf4;"></div>
<div style="position:absolute;top:939.46px;font-size:16px;line-height:16px;white-space:nowrap;color:#222;left:109.55px;">5</div>
<div style="position:absolute;top:939.46px;font-size:16px;line-height:16px;white-space:nowrap;color:#222;font-weight:700;letter-spacing:-0.176px;left:428.00px;">Глава 5. Объекты транспортного хозяйства и</div>
<div style="position:absolute;top:959.46px;font-size:16px;line-height:16px;white-space:nowrap;color:#222;font-weight:700;letter-spacing:-0.225px;left:428.00px;">связи</div>
<div style="position:absolute;left:51px;top:984px;width:2222px;height:35px;background:#ede9fd;"></div>
<div style="position:absolute;left:51px;top:1019px;width:2222px;height:1px;background:#d3c8ee;"></div>
<div style="position:absolute;left:185px;top:985px;width:1px;height:34px;background:#dcd3f3;"></div>
<div style="position:absolute;left:413px;top:985px;width:1px;height:34px;background:#dcd3f3;"></div>
<div style="position:absolute;left:833px;top:985px;width:1px;height:34px;background:#dcd3f3;"></div>
<div style="position:absolute;left:977px;top:985px;width:1px;height:34px;background:#dcd3f3;"></div>
<div style="position:absolute;left:1121px;top:985px;width:1px;height:34px;background:#dcd3f3;"></div>
<div style="position:absolute;left:1265px;top:985px;width:1px;height:34px;background:#dcd3f3;"></div>
<div style="position:absolute;left:1409px;top:985px;width:1px;height:34px;background:#dcd3f3;"></div>
<div style="position:absolute;left:1553px;top:985px;width:1px;height:34px;background:#dcd3f3;"></div>
<div style="position:absolute;left:1697px;top:985px;width:1px;height:34px;background:#dcd3f3;"></div>
<div style="position:absolute;left:1841px;top:985px;width:1px;height:34px;background:#dcd3f3;"></div>
<div style="position:absolute;left:1985px;top:985px;width:1px;height:34px;background:#dcd3f3;"></div>
<div style="position:absolute;left:2129px;top:985px;width:1px;height:34px;background:#dcd3f3;"></div>
<div style="position:absolute;left:2273px;top:985px;width:1px;height:34px;background:#dcd3f3;"></div>
<div style="position:absolute;top:992.46px;font-size:16px;line-height:16px;white-space:nowrap;color:#222;font-weight:700;left:103.80px;">И5</div>
<div style="position:absolute;top:992.46px;font-size:16px;line-height:16px;white-space:nowrap;color:#222;font-weight:700;letter-spacing:-0.284px;left:428.00px;">Итого по Главе 5</div>
<div style="position:absolute;top:992.46px;font-size:16px;line-height:16px;white-space:nowrap;color:#222;font-weight:700;letter-spacing:0.291px;left:930.74px;">0,00</div>
<div style="position:absolute;top:992.46px;font-size:16px;line-height:16px;white-space:nowrap;color:#222;font-weight:700;letter-spacing:0.291px;left:1074.74px;">0,00</div>
<div style="position:absolute;top:992.46px;font-size:16px;line-height:16px;white-space:nowrap;color:#222;font-weight:700;letter-spacing:0.291px;left:1218.74px;">0,00</div>
<div style="position:absolute;top:992.46px;font-size:16px;line-height:16px;white-space:nowrap;color:#222;font-weight:700;letter-spacing:0.291px;left:1362.74px;">0,00</div>
<div style="position:absolute;top:992.46px;font-size:16px;line-height:16px;white-space:nowrap;color:#222;font-weight:700;letter-spacing:0.291px;left:1506.74px;">0,00</div>
<div style="position:absolute;top:992.46px;font-size:16px;line-height:16px;white-space:nowrap;color:#222;font-weight:700;letter-spacing:0.291px;left:1650.74px;">0,00</div>
<div style="position:absolute;top:992.46px;font-size:16px;line-height:16px;white-space:nowrap;color:#222;font-weight:700;letter-spacing:0.291px;left:1794.74px;">0,00</div>
<div style="position:absolute;top:992.46px;font-size:16px;line-height:16px;white-space:nowrap;color:#222;font-weight:700;letter-spacing:0.291px;left:1938.74px;">0,00</div>
<div style="position:absolute;top:992.46px;font-size:16px;line-height:16px;white-space:nowrap;color:#222;font-weight:700;letter-spacing:0.291px;left:2082.74px;">0,00</div>
<div style="position:absolute;top:992.46px;font-size:16px;line-height:16px;white-space:nowrap;color:#222;font-weight:700;letter-spacing:0.291px;left:2226.74px;">0,00</div>
<div style="position:absolute;left:51px;top:1093px;width:2222px;height:1px;background:#e0daf4;"></div>
<div style="position:absolute;left:185px;top:1021px;width:1px;height:72px;background:#e0daf4;"></div>
<div style="position:absolute;left:413px;top:1021px;width:1px;height:72px;background:#e0daf4;"></div>
<div style="position:absolute;left:833px;top:1021px;width:1px;height:72px;background:#e0daf4;"></div>
<div style="position:absolute;left:1553px;top:1021px;width:1px;height:72px;background:#e0daf4;"></div>
<div style="position:absolute;left:2273px;top:1021px;width:1px;height:72px;background:#e0daf4;"></div>
<div style="position:absolute;top:1028.46px;font-size:16px;line-height:16px;white-space:nowrap;color:#222;left:109.55px;">6</div>
<div style="position:absolute;top:1028.46px;font-size:16px;line-height:16px;white-space:nowrap;color:#222;font-weight:700;letter-spacing:-0.101px;left:428.00px;">Глава 6. Наружные сети и сооружения</div>
<div style="position:absolute;top:1048.46px;font-size:16px;line-height:16px;white-space:nowrap;color:#222;font-weight:700;letter-spacing:-0.124px;left:428.00px;">водоснабжения, водоотведения,</div>
<div style="position:absolute;top:1068.46px;font-size:16px;line-height:16px;white-space:nowrap;color:#222;font-weight:700;letter-spacing:-0.009px;left:428.00px;">теплоснабжения и газоснабжения</div>
<div style="position:absolute;left:51px;top:1094px;width:2222px;height:35px;background:#ede9fd;"></div>
<div style="position:absolute;left:51px;top:1129px;width:2222px;height:1px;background:#d3c8ee;"></div>
<div style="position:absolute;left:185px;top:1095px;width:1px;height:34px;background:#dcd3f3;"></div>
<div style="position:absolute;left:413px;top:1095px;width:1px;height:34px;background:#dcd3f3;"></div>
<div style="position:absolute;left:833px;top:1095px;width:1px;height:34px;background:#dcd3f3;"></div>
<div style="position:absolute;left:977px;top:1095px;width:1px;height:34px;background:#dcd3f3;"></div>
<div style="position:absolute;left:1121px;top:1095px;width:1px;height:34px;background:#dcd3f3;"></div>
<div style="position:absolute;left:1265px;top:1095px;width:1px;height:34px;background:#dcd3f3;"></div>
<div style="position:absolute;left:1409px;top:1095px;width:1px;height:34px;background:#dcd3f3;"></div>
<div style="position:absolute;left:1553px;top:1095px;width:1px;height:34px;background:#dcd3f3;"></div>
<div style="position:absolute;left:1697px;top:1095px;width:1px;height:34px;background:#dcd3f3;"></div>
<div style="position:absolute;left:1841px;top:1095px;width:1px;height:34px;background:#dcd3f3;"></div>
<div style="position:absolute;left:1985px;top:1095px;width:1px;height:34px;background:#dcd3f3;"></div>
<div style="position:absolute;left:2129px;top:1095px;width:1px;height:34px;background:#dcd3f3;"></div>
<div style="position:absolute;left:2273px;top:1095px;width:1px;height:34px;background:#dcd3f3;"></div>
<div style="position:absolute;top:1102.46px;font-size:16px;line-height:16px;white-space:nowrap;color:#222;font-weight:700;left:103.80px;">И6</div>
<div style="position:absolute;top:1102.46px;font-size:16px;line-height:16px;white-space:nowrap;color:#222;font-weight:700;letter-spacing:-0.284px;left:428.00px;">Итого по Главе 6</div>
<div style="position:absolute;top:1102.46px;font-size:16px;line-height:16px;white-space:nowrap;color:#222;font-weight:700;letter-spacing:0.291px;left:930.74px;">0,00</div>
<div style="position:absolute;top:1102.46px;font-size:16px;line-height:16px;white-space:nowrap;color:#222;font-weight:700;letter-spacing:0.291px;left:1074.74px;">0,00</div>
<div style="position:absolute;top:1102.46px;font-size:16px;line-height:16px;white-space:nowrap;color:#222;font-weight:700;letter-spacing:0.291px;left:1218.74px;">0,00</div>
<div style="position:absolute;top:1102.46px;font-size:16px;line-height:16px;white-space:nowrap;color:#222;font-weight:700;letter-spacing:0.291px;left:1362.74px;">0,00</div>
<div style="position:absolute;top:1102.46px;font-size:16px;line-height:16px;white-space:nowrap;color:#222;font-weight:700;letter-spacing:0.291px;left:1506.74px;">0,00</div>
<div style="position:absolute;top:1102.46px;font-size:16px;line-height:16px;white-space:nowrap;color:#222;font-weight:700;letter-spacing:0.291px;left:1650.74px;">0,00</div>
<div style="position:absolute;top:1102.46px;font-size:16px;line-height:16px;white-space:nowrap;color:#222;font-weight:700;letter-spacing:0.291px;left:1794.74px;">0,00</div>
<div style="position:absolute;top:1102.46px;font-size:16px;line-height:16px;white-space:nowrap;color:#222;font-weight:700;letter-spacing:0.291px;left:1938.74px;">0,00</div>
<div style="position:absolute;top:1102.46px;font-size:16px;line-height:16px;white-space:nowrap;color:#222;font-weight:700;letter-spacing:0.291px;left:2082.74px;">0,00</div>
<div style="position:absolute;top:1102.46px;font-size:16px;line-height:16px;white-space:nowrap;color:#222;font-weight:700;letter-spacing:0.291px;left:2226.74px;">0,00</div>
<div style="position:absolute;left:51px;top:1182px;width:2222px;height:1px;background:#e0daf4;"></div>
<div style="position:absolute;left:185px;top:1131px;width:1px;height:51px;background:#e0daf4;"></div>
<div style="position:absolute;left:413px;top:1131px;width:1px;height:51px;background:#e0daf4;"></div>
<div style="position:absolute;left:833px;top:1131px;width:1px;height:51px;background:#e0daf4;"></div>
<div style="position:absolute;left:1553px;top:1131px;width:1px;height:51px;background:#e0daf4;"></div>
<div style="position:absolute;left:2273px;top:1131px;width:1px;height:51px;background:#e0daf4;"></div>
<div style="position:absolute;top:1138.46px;font-size:16px;line-height:16px;white-space:nowrap;color:#222;left:109.55px;">7</div>
<div style="position:absolute;top:1138.46px;font-size:16px;line-height:16px;white-space:nowrap;color:#222;font-weight:700;letter-spacing:-0.241px;left:428.00px;">Глава 7. Благоустройство и озеленение</div>
<div style="position:absolute;top:1158.46px;font-size:16px;line-height:16px;white-space:nowrap;color:#222;font-weight:700;letter-spacing:-0.357px;left:428.00px;">территории</div>
<div style="position:absolute;left:51px;top:1183px;width:2222px;height:36px;background:#ede9fd;"></div>
<div style="position:absolute;left:51px;top:1219px;width:2222px;height:1px;background:#d3c8ee;"></div>
<div style="position:absolute;left:185px;top:1184px;width:1px;height:35px;background:#dcd3f3;"></div>
<div style="position:absolute;left:413px;top:1184px;width:1px;height:35px;background:#dcd3f3;"></div>
<div style="position:absolute;left:833px;top:1184px;width:1px;height:35px;background:#dcd3f3;"></div>
<div style="position:absolute;left:977px;top:1184px;width:1px;height:35px;background:#dcd3f3;"></div>
<div style="position:absolute;left:1121px;top:1184px;width:1px;height:35px;background:#dcd3f3;"></div>
<div style="position:absolute;left:1265px;top:1184px;width:1px;height:35px;background:#dcd3f3;"></div>
<div style="position:absolute;left:1409px;top:1184px;width:1px;height:35px;background:#dcd3f3;"></div>
<div style="position:absolute;left:1553px;top:1184px;width:1px;height:35px;background:#dcd3f3;"></div>
<div style="position:absolute;left:1697px;top:1184px;width:1px;height:35px;background:#dcd3f3;"></div>
<div style="position:absolute;left:1841px;top:1184px;width:1px;height:35px;background:#dcd3f3;"></div>
<div style="position:absolute;left:1985px;top:1184px;width:1px;height:35px;background:#dcd3f3;"></div>
<div style="position:absolute;left:2129px;top:1184px;width:1px;height:35px;background:#dcd3f3;"></div>
<div style="position:absolute;left:2273px;top:1184px;width:1px;height:35px;background:#dcd3f3;"></div>
<div style="position:absolute;top:1191.46px;font-size:16px;line-height:16px;white-space:nowrap;color:#222;font-weight:700;left:103.80px;">И7</div>
<div style="position:absolute;top:1191.46px;font-size:16px;line-height:16px;white-space:nowrap;color:#222;font-weight:700;letter-spacing:-0.284px;left:428.00px;">Итого по Главе 7</div>
<div style="position:absolute;top:1191.46px;font-size:16px;line-height:16px;white-space:nowrap;color:#222;font-weight:700;letter-spacing:0.291px;left:930.74px;">0,00</div>
<div style="position:absolute;top:1191.46px;font-size:16px;line-height:16px;white-space:nowrap;color:#222;font-weight:700;letter-spacing:0.291px;left:1074.74px;">0,00</div>
<div style="position:absolute;top:1191.46px;font-size:16px;line-height:16px;white-space:nowrap;color:#222;font-weight:700;letter-spacing:0.291px;left:1218.74px;">0,00</div>
<div style="position:absolute;top:1191.46px;font-size:16px;line-height:16px;white-space:nowrap;color:#222;font-weight:700;letter-spacing:0.291px;left:1362.74px;">0,00</div>
<div style="position:absolute;top:1191.46px;font-size:16px;line-height:16px;white-space:nowrap;color:#222;font-weight:700;letter-spacing:0.291px;left:1506.74px;">0,00</div>
<div style="position:absolute;top:1191.46px;font-size:16px;line-height:16px;white-space:nowrap;color:#222;font-weight:700;letter-spacing:0.291px;left:1650.74px;">0,00</div>
<div style="position:absolute;top:1191.46px;font-size:16px;line-height:16px;white-space:nowrap;color:#222;font-weight:700;letter-spacing:0.291px;left:1794.74px;">0,00</div>
<div style="position:absolute;top:1191.46px;font-size:16px;line-height:16px;white-space:nowrap;color:#222;font-weight:700;letter-spacing:0.291px;left:1938.74px;">0,00</div>
<div style="position:absolute;top:1191.46px;font-size:16px;line-height:16px;white-space:nowrap;color:#222;font-weight:700;letter-spacing:0.291px;left:2082.74px;">0,00</div>
<div style="position:absolute;top:1191.46px;font-size:16px;line-height:16px;white-space:nowrap;color:#222;font-weight:700;letter-spacing:0.291px;left:2226.74px;">0,00</div>
</div>
<div style="position:absolute;left:414px;top:480px;width:418px;height:54px;border:1px solid #000"></div>
<div style="position:absolute;left:49px;top:1193px;width:2510px;height:1px;background:#d3c8ee;"></div>
<div style="position:absolute;left:2273px;top:444px;width:1px;height:749px;background:#d3c8ee;"></div>
<div style="position:absolute;left:2515px;top:444px;width:9px;height:342px;background:#a893d6;border-radius:5px;"></div>
<div style="position:absolute;left:2524px;top:294px;width:1px;height:899px;background:#d9d0f1;"></div>
<div style="position:absolute;left:2525px;top:291px;width:35px;height:1px;background:#d3c8ee;"></div>
<div style="position:absolute;left:2525px;top:507px;width:35px;height:1px;background:#d3c8ee;"></div>
<div style="position:absolute;left:2536px;top:316.5px;width:20px;height:166px;writing-mode:vertical-rl;font-size:17.8px;line-height:20px;color:#111;white-space:nowrap;letter-spacing:0.3px;-webkit-text-stroke:0.35px #111">Список начислений</div>
<div style="position:absolute;left:50px;top:1194px;width:300px;height:6px;background:#ff9d00;"></div>
<div style="position:absolute;left:50px;top:1200px;width:300px;height:39px;background:#ffebb4;"></div>
<div style="position:absolute;top:1206.85px;font-size:20.5px;line-height:20.5px;white-space:nowrap;color:#1c1c1c;font-weight:700;letter-spacing:-0.694px;left:121.30px;">Сводный сметны…</div>
<div style="position:absolute;left:1912px;top:1194px;width:1px;height:42px;background:#d8d8d8;"></div>
<div style="position:absolute;top:1206.92px;font-size:19px;line-height:19px;white-space:nowrap;color:#111;font-weight:700;letter-spacing:0.219px;left:1931.00px;">Всего</div>
<div style="position:absolute;top:1207.07px;font-size:20px;line-height:20px;white-space:nowrap;color:#222;letter-spacing:0.224px;left:2014.00px;">Б: 4 875,88 тыс. р.</div>
<div style="position:absolute;top:1207.07px;font-size:20px;line-height:20px;white-space:nowrap;color:#222;letter-spacing:0.201px;left:2216.00px;">Т: 53 691,40 тыс. р.</div>
<div style="position:absolute;left:813px;top:543px;width:230px;height:188px;background:#fff;box-shadow:0 2px 10px rgba(0,0,0,.35)"></div>
<div style="position:absolute;top:556.03px;font-size:16.5px;line-height:16.5px;white-space:nowrap;color:#111;font-weight:700;letter-spacing:-0.560px;left:830.00px;">Вставка:</div>
<div style="position:absolute;left:813px;top:583px;width:230px;height:2px;background:#e7e8e8;"></div>
<div style="position:absolute;left:813px;top:636px;width:230px;height:2px;background:#e7e8e8;"></div>
<div style="position:absolute;top:599.53px;font-size:16.5px;line-height:16.5px;white-space:nowrap;color:#1a1a1a;letter-spacing:0.072px;left:864.00px;">Начисление</div>
<div style="position:absolute;top:651.53px;font-size:16.5px;line-height:16.5px;white-space:nowrap;color:#1a1a1a;letter-spacing:0.272px;left:864.00px;">Включить в расчет</div>
<div style="position:absolute;top:698.53px;font-size:16.5px;line-height:16.5px;white-space:nowrap;color:#1a1a1a;letter-spacing:0.167px;left:864.00px;">Удалить</div>
<svg style="position:absolute;left:0;top:0" width="2560" height="1244" viewBox="0 0 2560 1244">
<rect x="857.10" y="56.60" width="166.60" height="38.20" fill="none" stroke="#ff0000" stroke-width="3.2"/><rect x="660.30" y="96.20" width="142.50" height="141.90" fill="none" stroke="#ff0000" stroke-width="3.2"/><rect x="816.10" y="633.30" width="228.30" height="51.10" fill="none" stroke="#ff0000" stroke-width="3.2"/>
<polyline points="719,256 645.7,517.6 797,637" fill="none" stroke="#ff0000" stroke-width="3.2" stroke-linejoin="miter"/>
<polygon points="723.7,239.3 709.9,258.6 725.3,263" fill="#ff0000"/>
<polygon points="812,655 798.5,633.8 788.6,645.7" fill="#ff0000"/>
</svg>
<svg style="position:absolute;left:0;top:0" width="2560" height="1244" viewBox="0 0 2560 1244" font-family="Liberation Sans, sans-serif">
<circle cx="47.6" cy="52.9" r="26.1" fill="#4f2da7"/>
<path d="M34.6 34.1 H54 L63.4 43.3 V69.2 a1.8 1.8 0 0 1 -1.8 1.8 H34.6 a1.8 1.8 0 0 1 -1.8 -1.8 V35.9 a1.8 1.8 0 0 1 1.8 -1.8 Z" fill="none" stroke="#fff" stroke-width="1.6"/>
<path d="M54.2 34 V41 a2.2 2.2 0 0 0 2.2 2.2 H63.5 Z" fill="#fff"/>
<rect x="36" y="45" width="4.6" height="2.9" fill="#fff"/>
<rect x="42.05" y="45" width="4.6" height="2.9" fill="#fff"/>
<rect x="48.1" y="45" width="4.6" height="2.9" fill="#fff"/>
<rect x="54.15" y="45" width="4.6" height="2.9" fill="#fff"/>
<rect x="36" y="49.35" width="4.6" height="2.9" fill="#fff"/>
<rect x="42.05" y="49.35" width="4.6" height="2.9" fill="#fff"/>
<rect x="48.1" y="49.35" width="4.6" height="2.9" fill="#fff"/>
<rect x="54.15" y="49.35" width="4.6" height="2.9" fill="#fff"/>
<rect x="36" y="53.8" width="4.6" height="2.9" fill="#fff"/>
<rect x="42.05" y="53.8" width="4.6" height="2.9" fill="#fff"/>
<rect x="48.1" y="53.8" width="4.6" height="2.9" fill="#fff"/>
<rect x="54.15" y="53.8" width="4.6" height="2.9" fill="#fff"/>
<rect x="36" y="58.3" width="4.6" height="2.9" fill="#fff"/>
<rect x="42.05" y="58.3" width="4.6" height="2.9" fill="#fff"/>
<rect x="48.1" y="58.3" width="4.6" height="2.9" fill="#fff"/>
<rect x="54.15" y="58.3" width="4.6" height="2.9" fill="#fff"/>
<rect x="36" y="64.1" width="16.6" height="3" fill="#fff"/><rect x="54.15" y="64.1" width="4.6" height="3" fill="#fff"/>
<rect x="73.5" y="125.6" width="42.7" height="42.7" rx="5.5" fill="none" stroke="#a0a0a0" stroke-width="1.6"/>
<rect x="90.5" y="130.2" width="20.6" height="9.6" rx="2.6" fill="#a0a0a0"/>
<rect x="97.2" y="142.3" width="14" height="9.4" rx="2.6" fill="#a0a0a0"/>
<rect x="88" y="154" width="23.2" height="9.7" rx="2.6" fill="#a0a0a0"/>
<text x="80.8" y="139" font-size="8" fill="#a0a0a0" text-anchor="middle">1</text>
<text x="80.8" y="150" font-size="8" fill="#a0a0a0" text-anchor="middle">2</text>
<text x="80.8" y="161" font-size="8" fill="#a0a0a0" text-anchor="middle">3</text>
<polygon points="88,196.2 102.3,196.2 95.15,203.4" fill="#a0a0a0"/>
<rect x="254.2" y="126.1" width="43.5" height="43.2" rx="6.5" fill="none" stroke="#a0a0a0" stroke-width="1.7"/>
<rect x="258.4" y="128.60000000000002" width="21.80000000000001" height="4.4" rx="2.2" fill="#a0a0a0"/>
<rect x="263.8" y="134.9" width="16.399999999999977" height="4.4" rx="2.2" fill="#a0a0a0"/>
<rect x="263.8" y="141.20000000000002" width="16.399999999999977" height="4.4" rx="2.2" fill="#a0a0a0"/>
<rect x="258.4" y="148.8" width="21.80000000000001" height="4.4" rx="2.2" fill="#a0a0a0"/>
<rect x="263.8" y="155.4" width="16.399999999999977" height="4.4" rx="2.2" fill="#a0a0a0"/>
<rect x="263.8" y="161.4" width="16.399999999999977" height="4.4" rx="2.2" fill="#a0a0a0"/>
<path d="M288.4 129.2 V164 M282.4 158.4 L288.4 164.4 L294.5 158.4" fill="none" stroke="#a0a0a0" stroke-width="1.8" stroke-linecap="round" stroke-linejoin="round"/>
<rect x="428.1" y="123.1" width="47.9" height="10.4" rx="1.6" fill="#e9b35f"/>
<path d="M430.5 133.5 V165 M430.5 138 q0 3.5 4 3.5 M430.5 150 q0 3.5 4 3.5 M430.5 162 q0 3.5 4 3.5" fill="none" stroke="#5a5a5a" stroke-width="0.9"/>
<rect x="434.7" y="137.1" width="22.7" height="9.3" rx="1.2" fill="#4f2da7"/>
<rect x="434.7" y="149.4" width="22.7" height="9.3" rx="1.2" fill="#4f2da7"/>
<rect x="434.7" y="161.2" width="22.7" height="9.3" rx="1.2" fill="#4f2da7"/>
<path d="M460 153.8 H474.6 M468.4 145.6 L459.6 153.8 L468.4 162.2" fill="none" stroke="#4f2da7" stroke-width="3.4" stroke-linecap="round" stroke-linejoin="round"/>
<path d="M555.2 126.5 a3 3 0 0 1 3 -3 H602.6 a3 3 0 0 1 3 3 V163 a2.5 2.5 0 0 1 -2.5 2.5 H576 l-3.5 4.5 H558.2 a3 3 0 0 1 -3 -3 Z" fill="none" stroke="#a0a0a0" stroke-width="1.6"/>
<path d="M554.4 128.2 V126.3 a3 3 0 0 1 3 -3 H603.4 a3 3 0 0 1 3 3 V128.2 Z" fill="#a0a0a0"/>
<circle cx="595.5" cy="125.8" r="0.9" fill="#fff"/>
<circle cx="599" cy="125.8" r="0.9" fill="#fff"/>
<circle cx="602.5" cy="125.8" r="0.9" fill="#fff"/>
<rect x="558.5" y="132.1" width="21.8" height="20" rx="2.5" fill="none" stroke="#a0a0a0" stroke-width="1.6"/>
<path d="M557.7 136 V134.3 a3 3 0 0 1 3 -3 H578.1 a3 3 0 0 1 3 3 V136 Z" fill="#a0a0a0"/>
<path d="M583.5 142.3 H587 a2 2 0 0 1 2 2 V158" fill="none" stroke="#a0a0a0" stroke-width="2.9"/>
<polygon points="582.4,157 595,157 588.7,163.2" fill="#a0a0a0"/>
<path d="M572.5 170.5 l4 -5.6 H597 l-3 4.2 q-1 1.4 -3 1.4 Z" fill="#a0a0a0"/>
<rect x="705.8" y="127" width="27.6" height="11.6" rx="1.4" fill="#4b3b91"/>
<rect x="705.8" y="141.6" width="27.6" height="11.9" rx="1.4" fill="#008510"/>
<rect x="705.8" y="156.3" width="27.6" height="11.8" rx="1.4" fill="#4b3b91"/>
<path d="M738.4 147.9 H750 M745 142.3 L738 147.9 L745 153.5" fill="none" stroke="#4b3b91" stroke-width="2.6" stroke-linecap="round" stroke-linejoin="round"/>
<path d="M856 124.3 H894 a3.6 3.6 0 0 1 3.6 3.6 V154.6 a3.6 3.6 0 0 1 -3.6 3.6 H872 L859.6 168.5 V158.2 H856 a3.6 3.6 0 0 1 -3.6 -3.6 V127.9 a3.6 3.6 0 0 1 3.6 -3.6 Z" fill="none" stroke="#a0a0a0" stroke-width="1.6" stroke-linejoin="round"/>
<text x="874.8" y="150.3" font-size="25.5" font-weight="700" fill="#a0a0a0" stroke="#a0a0a0" stroke-width="0.7" text-anchor="middle">Ж</text>
<rect x="998.95" y="124.05" width="26.699999999999978" height="25.099999999999998" rx="2.6" fill="#fff" stroke="#7b7b7b" stroke-width="1.7"/>
<path d="M998.1 128.3 V126.2 a3 3 0 0 1 3 -3 H1023.5 a3 3 0 0 1 3 3 V128.3 Z" fill="#7b7b7b"/>
<rect x="986.85" y="135.25" width="26.699999999999978" height="21.200000000000006" rx="2.6" fill="#fff" stroke="#7b7b7b" stroke-width="1.7"/>
<path d="M986 139.4 V137.4 a3 3 0 0 1 3 -3 H1011.4 a3 3 0 0 1 3 3 V139.4 Z" fill="#7b7b7b"/>
<rect x="1002.95" y="145.15" width="30.900000000000023" height="24.49999999999999" rx="2.6" fill="#fff" stroke="#7b7b7b" stroke-width="1.7"/>
<path d="M1002.1 149 V147.3 a3 3 0 0 1 3 -3 H1031.7 a3 3 0 0 1 3 3 V149 Z" fill="#7b7b7b"/>
<rect x="1029.6" y="146.20000000000002" width="1.8" height="1.6" fill="#fff"/>
<rect x="1025.8" y="146.20000000000002" width="1.8" height="1.6" fill="#fff"/>
<rect x="1022.0000000000001" y="146.20000000000002" width="1.8" height="1.6" fill="#fff"/>
<rect x="5.1" y="247" width="11.2" height="31.6" rx="2.6" fill="#4f2da7"/>
<rect x="6.699999999999999" y="251" width="8" height="14.6" rx="1.8" fill="#fff"/>
<rect x="7.3" y="252.85" width="6.8" height="1.5" fill="#444"/>
<rect x="7.3" y="257.45" width="6.8" height="1.5" fill="#444"/>
<rect x="7.3" y="262.05" width="6.8" height="1.5" fill="#444"/>
<circle cx="10.7" cy="271.8" r="3.2" fill="#fff"/>
<rect x="19" y="247" width="11.2" height="31.6" rx="2.6" fill="#e9bd20"/>
<rect x="20.6" y="251" width="8" height="14.6" rx="1.8" fill="#fff"/>
<rect x="21.2" y="252.85" width="6.8" height="1.5" fill="#444"/>
<rect x="21.2" y="257.45" width="6.8" height="1.5" fill="#444"/>
<rect x="21.2" y="262.05" width="6.8" height="1.5" fill="#444"/>
<circle cx="24.6" cy="271.8" r="3.2" fill="#fff"/>
<rect x="32.8" y="247" width="11.2" height="31.6" rx="2.6" fill="#4f2da7"/>
<rect x="34.4" y="251" width="8" height="14.6" rx="1.8" fill="#fff"/>
<rect x="35.0" y="252.85" width="6.8" height="1.5" fill="#444"/>
<rect x="35.0" y="257.45" width="6.8" height="1.5" fill="#444"/>
<rect x="35.0" y="262.05" width="6.8" height="1.5" fill="#444"/>
<circle cx="38.4" cy="271.8" r="3.2" fill="#fff"/>
<rect x="5.1" y="280.1" width="38.9" height="4.6" rx="2" fill="#e9b35f"/>
<path d="M16.8 299.5 V296.5 a2 2 0 0 1 2 -2 H30.2 a2 2 0 0 1 2 2 V299.5" fill="none" stroke="#7d7d7d" stroke-width="1.1"/>
<rect x="5.1" y="300.2" width="38.9" height="31.4" rx="2.6" fill="#4f2da7"/>
<rect x="5.1" y="314.9" width="38.9" height="2.1" fill="#fff"/>
<rect x="20" y="310.1" width="9" height="12.9" rx="1" fill="#fff"/>
<rect x="21.9" y="311.8" width="5.4" height="9.2" rx="0.6" fill="#e9b35f"/>
<path d="M5.6 348 H43.5 V371.5 a3 3 0 0 1 -3 3 H37 l-1.6 4.4 H8.6 a3 3 0 0 1 -3 -3 Z" fill="#fff" stroke="#555" stroke-width="1"/>
<path d="M5.1 350 V347 a2.2 2.2 0 0 1 2.2 -2.2 H41.8 a2.2 2.2 0 0 1 2.2 2.2 V350 Z" fill="#4f2da7"/>
<rect x="8.6" y="352.4" width="32.2" height="1.9" rx="0.9" fill="#555"/>
<rect x="8.6" y="357.3" width="9.8" height="2" rx="1" fill="#aaa"/>
<rect x="19.9" y="357.3" width="9.6" height="2" rx="1" fill="#aaa"/>
<rect x="30.9" y="357.3" width="9.9" height="2" rx="1" fill="#4f2da7"/>
<rect x="8.6" y="361.7" width="9.8" height="2" rx="1" fill="#aaa"/>
<rect x="19.9" y="361.7" width="9.6" height="2" rx="1" fill="#aaa"/>
<rect x="30.9" y="361.7" width="9.9" height="2" rx="1" fill="#4f2da7"/>
<rect x="8.6" y="366.1" width="9.8" height="2" rx="1" fill="#aaa"/>
<rect x="19.9" y="366.1" width="9.6" height="2" rx="1" fill="#aaa"/>
<rect x="30.9" y="366.1" width="9.9" height="2" rx="1" fill="#4f2da7"/>
<path d="M19 378.6 l2 -3.6 H36.8 M27 378.6 l2 -3.6" fill="none" stroke="#555" stroke-width="0.9"/>
<path d="M135.7 257.9 L152.4 274.5 M152.4 257.9 L135.7 274.5" stroke="#999" stroke-width="3.7" fill="none"/>
<path d="M172.1 265.1 L177.8 270.4 L187.9 259.8" stroke="#999" stroke-width="3.4" fill="none"/>
<path d="M530 306.1 H543.4 M534.9 300.2 L529.3 306.1 L534.9 312" fill="none" stroke="#e59a88" stroke-width="2.2" stroke-linecap="round" stroke-linejoin="round"/>
<path d="M515.5 313.3 H529 M524.1 307.4 L529.6 313.3 L524.1 319.2" fill="none" stroke="#80b06a" stroke-width="2.4" stroke-linecap="round" stroke-linejoin="round"/>
<rect x="61.8" y="486.4" width="9" height="3.6" fill="#4f2da7"/>
<rect x="68.1" y="491.79999999999995" width="8.8" height="3.9" fill="#4f2da7"/>
<rect x="61.8" y="497.29999999999995" width="9" height="3.5" fill="#4f2da7"/>
<path d="M62.099999999999994 493.79999999999995 H65.6 M64.2 492.29999999999995 L65.8 493.79999999999995 L64.2 495.29999999999995" fill="none" stroke="#4f2da7" stroke-width="0.9"/>
<rect x="61.8" y="544.2" width="9" height="3.6" fill="#4b3b91"/>
<rect x="68.1" y="549.6" width="8.8" height="3.9" fill="#c8452f"/>
<rect x="61.8" y="555.1" width="9" height="3.5" fill="#4b3b91"/>
<path d="M62.099999999999994 551.6 H65.6 M64.2 550.1 L65.8 551.6 L64.2 553.1" fill="none" stroke="#4b3b91" stroke-width="0.9"/>
<rect x="61.8" y="633.3" width="9" height="3.6" fill="#4b3b91"/>
<rect x="68.1" y="638.6999999999999" width="8.8" height="3.9" fill="#c8452f"/>
<rect x="61.8" y="644.1999999999999" width="9" height="3.5" fill="#4b3b91"/>
<path d="M62.099999999999994 640.6999999999999 H65.6 M64.2 639.1999999999999 L65.8 640.6999999999999 L64.2 642.1999999999999" fill="none" stroke="#4b3b91" stroke-width="0.9"/>
<path d="M65.7 516.6 L72.4 523.3 L79.2 516.6" fill="none" stroke="#4f2da7" stroke-width="1.7"/>
<rect x="86" y="1210" width="10.2" height="19.8" fill="#e9b35f"/>
<rect x="97" y="1204" width="15" height="25.8" fill="#4f2da7"/>
<rect x="88" y="1212.2" width="2.3" height="2.3" fill="#ffebb4"/>
<rect x="92" y="1212.2" width="2.3" height="2.3" fill="#ffebb4"/>
<rect x="88" y="1216.6" width="2.3" height="2.3" fill="#ffebb4"/>
<rect x="92" y="1216.6" width="2.3" height="2.3" fill="#ffebb4"/>
<rect x="88" y="1221" width="2.3" height="2.3" fill="#ffebb4"/>
<rect x="92" y="1221" width="2.3" height="2.3" fill="#ffebb4"/>
<rect x="88.6" y="1226" width="4.6" height="3" fill="#ffebb4"/>
<rect x="99.2" y="1206.2" width="2.4" height="2.4" fill="#ffebb4"/>
<rect x="103.4" y="1206.2" width="2.4" height="2.4" fill="#ffebb4"/>
<rect x="107.6" y="1206.2" width="2.4" height="2.4" fill="#ffebb4"/>
<rect x="99.2" y="1210.5" width="2.4" height="2.4" fill="#ffebb4"/>
<rect x="103.4" y="1210.5" width="2.4" height="2.4" fill="#ffebb4"/>
<rect x="107.6" y="1210.5" width="2.4" height="2.4" fill="#ffebb4"/>
<rect x="99.2" y="1214.8" width="2.4" height="2.4" fill="#ffebb4"/>
<rect x="103.4" y="1214.8" width="2.4" height="2.4" fill="#ffebb4"/>
<rect x="107.6" y="1214.8" width="2.4" height="2.4" fill="#ffebb4"/>
<rect x="99.2" y="1219.1" width="2.4" height="2.4" fill="#ffebb4"/>
<rect x="103.4" y="1219.1" width="2.4" height="2.4" fill="#ffebb4"/>
<rect x="107.6" y="1219.1" width="2.4" height="2.4" fill="#ffebb4"/>
<rect x="102.2" y="1225" width="4.8" height="3.2" fill="#ffebb4"/>
<path d="M324.6 1209.6 L338.8 1223.8 M338.8 1209.6 L324.6 1223.8" stroke="#111" stroke-width="1.7" fill="none"/>
<rect x="831.6" y="598.4" width="16" height="18.2" rx="1.2" fill="#fff" stroke="#8a8a8a" stroke-width="0.9"/>
<rect x="833.4" y="600.8" width="12.4" height="0.9" fill="#bbb"/>
<rect x="833.4" y="603.3" width="12.4" height="1.6" fill="#4f2da7"/>
<rect x="833.4" y="606.2" width="12.4" height="1.4" fill="#ccc"/>
<rect x="833.4" y="609" width="12.4" height="0.9" fill="#bbb"/>
<rect x="841.4" y="613.6" width="4" height="0.8" fill="#ccc"/>
<rect x="830.9" y="651.7" width="10.7" height="4.5" rx="0.5" fill="#4b3b91"/>
<rect x="830.9" y="658.1" width="10.7" height="4.3" rx="0.5" fill="#008510"/>
<rect x="830.9" y="664.1" width="10.7" height="4.5" rx="0.5" fill="#4b3b91"/>
<path d="M843.6 660.4 H848.4 M845.8 658.2 L843.4 660.4 L845.8 662.6" fill="none" stroke="#4b3b91" stroke-width="1"/>
<path d="M832.2 698 H837 q0 -1.2 1.2 -1.2 H841 q1.2 0 1.2 1.2 H846.8 V699.8 H832.2 Z" fill="#c8472f"/>
<path d="M833.3 700.9 H845.9 V713 a2 2 0 0 1 -2 2 H835.3 a2 2 0 0 1 -2 -2 Z" fill="#c8472f"/>
</svg>
</div></body></html>
